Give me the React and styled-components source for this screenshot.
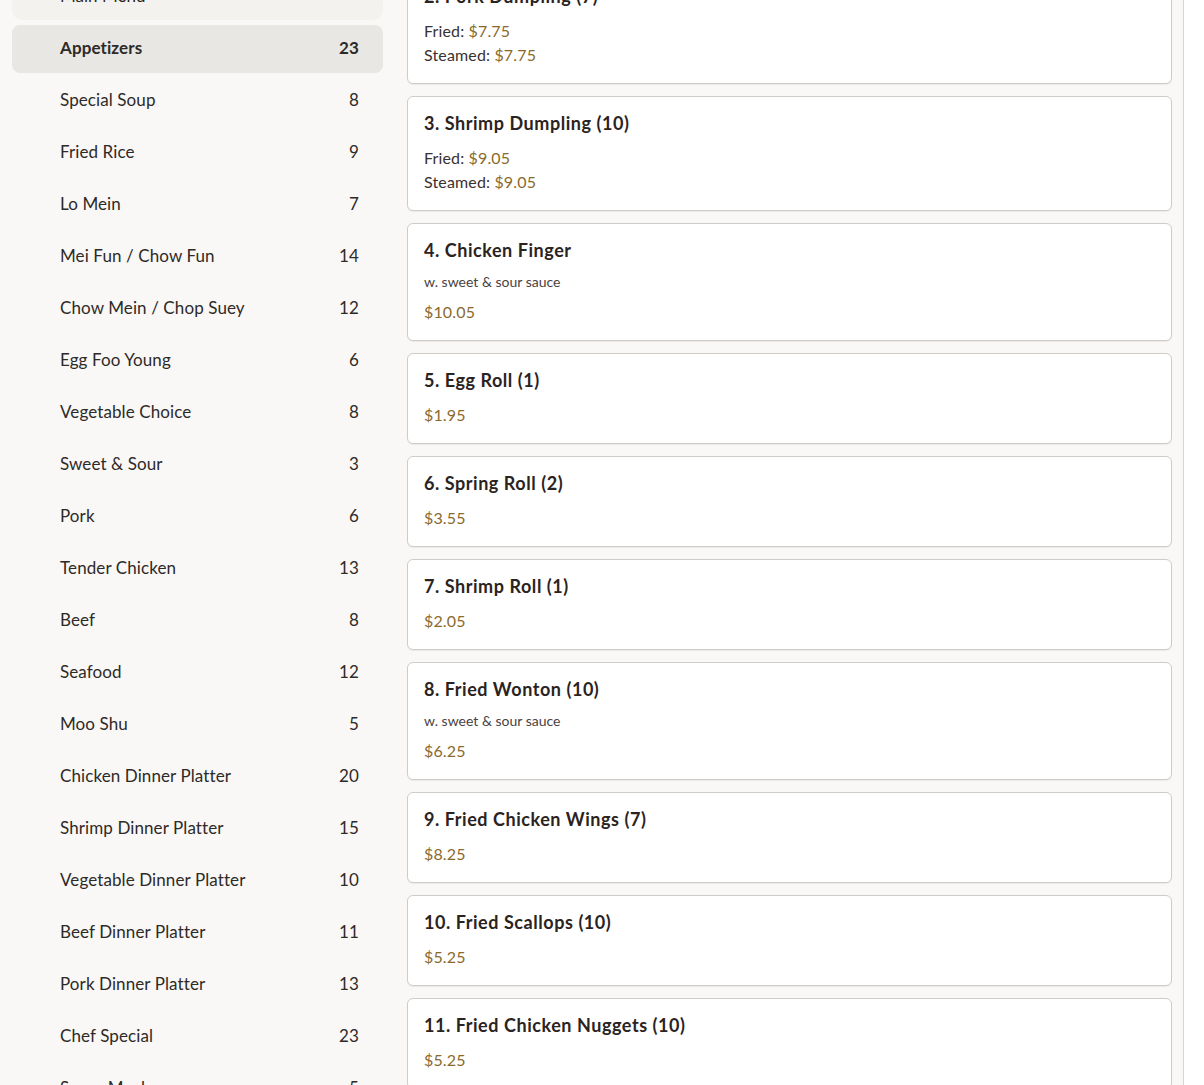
import React, { useLayoutEffect, useRef } from "react";
import styled, { createGlobalStyle } from "styled-components";

const Global = createGlobalStyle`
  html, body { margin: 0; padding: 0; background: #ffffff; }
  body { font-family: Lato, "Noto Sans", sans-serif; color: #2b2321; }
  * { box-sizing: border-box; }
`;

const Shell = styled.div`
  width: 1184px;
  height: 1085px;
  background: #f9f8f6;
  border-right: 1px solid #d9d6d2;
  display: grid;
  grid-template-columns: 371px 1fr;
  gap: 24px;
  padding: 0 11px 0 12px;
`;

const Scroller = styled.div`
  height: 1085px;
  overflow: hidden;
`;

const SideList = styled.nav`
  display: flex;
  flex-direction: column;
  gap: 4px;
  padding: 12px 0;
`;

const GroupHeader = styled.div`
  height: 48px;
  border-radius: 10px;
  background: #f3f2ef;
  display: flex;
  align-items: center;
  gap: 6px;
  padding: 0 24px 2px 30px;
  font-size: 17px;
  font-weight: 400;
  color: #2b2321;
  margin-bottom: 1px;
`;

const Item = styled.div`
  height: 48px;
  border-radius: 8px;
  display: flex;
  align-items: center;
  justify-content: space-between;
  padding: 0 24px 3px 48px;
  font-size: 17px;
  letter-spacing: 0.1px;
  color: #2e2a28;
  font-weight: ${(p) => (p.$active ? 700 : 400)};
  background: ${(p) => (p.$active ? "#e8e7e4" : "transparent")};
`;

const Count = styled.span`
  font-size: 17px;
`;

const CardList = styled.div`
  display: flex;
  flex-direction: column;
  gap: 12px;
  padding: 12px 0 24px;
`;

const SectionTitle = styled.h2`
  margin: 0 0 4px;
  font-size: 24px;
  font-weight: 700;
`;

const Card = styled.div`
  background: #ffffff;
  border: 1px solid #cfccc8;
  border-radius: 6px;
  padding: 15px 16px 16px;
  box-shadow: 0 1px 1px rgba(0, 0, 0, 0.06);
`;

const Title = styled.div`
  font-size: 18px;
  font-weight: 700;
  letter-spacing: 0.55px;
  line-height: 22px;
  color: #2b2321;
  margin-bottom: 12px;
`;

const Desc = styled.div`
  font-size: 14px;
  line-height: 20px;
  color: #4a4240;
  margin: -1px 0 8px;
`;

const PriceLine = styled.div`
  font-size: 16px;
  line-height: 24px;
  letter-spacing: 0.15px;
  color: #3a3230;
`;

const Price = styled.span`
  color: #8a6a2c;
`;

const categories = [
  ["Appetizers", 23],
  ["Special Soup", 8],
  ["Fried Rice", 9],
  ["Lo Mein", 7],
  ["Mei Fun / Chow Fun", 14],
  ["Chow Mein / Chop Suey", 12],
  ["Egg Foo Young", 6],
  ["Vegetable Choice", 8],
  ["Sweet & Sour", 3],
  ["Pork", 6],
  ["Tender Chicken", 13],
  ["Beef", 8],
  ["Seafood", 12],
  ["Moo Shu", 5],
  ["Chicken Dinner Platter", 20],
  ["Shrimp Dinner Platter", 15],
  ["Vegetable Dinner Platter", 10],
  ["Beef Dinner Platter", 11],
  ["Pork Dinner Platter", 13],
  ["Chef Special", 23],
  ["Super Meals", 5],
];

const items = [
  { t: "1. Crab Rangoon (8)", prices: [["", "$7.25"]] },
  { t: "2. Pork Dumpling (7)", prices: [["Fried", "$7.75"], ["Steamed", "$7.75"]] },
  { t: "3. Shrimp Dumpling (10)", prices: [["Fried", "$9.05"], ["Steamed", "$9.05"]] },
  { t: "4. Chicken Finger", d: "w. sweet & sour sauce", prices: [["", "$10.05"]] },
  { t: "5. Egg Roll (1)", prices: [["", "$1.95"]] },
  { t: "6. Spring Roll (2)", prices: [["", "$3.55"]] },
  { t: "7. Shrimp Roll (1)", prices: [["", "$2.05"]] },
  { t: "8. Fried Wonton (10)", d: "w. sweet & sour sauce", prices: [["", "$6.25"]] },
  { t: "9. Fried Chicken Wings (7)", prices: [["", "$8.25"]] },
  { t: "10. Fried Scallops (10)", prices: [["", "$5.25"]] },
  { t: "11. Fried Chicken Nuggets (10)", prices: [["", "$5.25"]] },
  { t: "12. Boneless Spare Ribs", prices: [["Sm", "$9.25"], ["Lg", "$16.25"]] },
];

function Chevron() {
  return (
    <svg width="12" height="12" viewBox="0 0 24 24" fill="none" stroke="#2b2321" strokeWidth="2.5" strokeLinecap="round" strokeLinejoin="round">
      <path d="M6 9l6 6 6-6" />
    </svg>
  );
}

export default function App() {
  const sideRef = useRef(null);
  const mainRef = useRef(null);
  useLayoutEffect(() => {
    if (sideRef.current) sideRef.current.scrollTop = 40;
    if (mainRef.current) {
      const cards = mainRef.current.querySelectorAll("[data-card]");
      const target = cards[1];
      if (target) mainRef.current.scrollTop = target.offsetTop - mainRef.current.offsetTop + 31;
    }
  }, []);

  return (
    <>
      <Global />
      <Shell>
        <Scroller ref={sideRef}>
          <SideList>
            <GroupHeader>
              <Chevron />
              Main Menu
            </GroupHeader>
            {categories.map(([name, n], i) => (
              <Item key={name} $active={i === 0}>
                <span>{name}</span>
                <Count>{n}</Count>
              </Item>
            ))}
          </SideList>
        </Scroller>
        <Scroller ref={mainRef}>
          <CardList>
            <SectionTitle>Appetizers</SectionTitle>
            {items.map((it) => (
              <Card key={it.t} data-card="1">
                <Title>{it.t}</Title>
                {it.d && <Desc>{it.d}</Desc>}
                {it.prices.map(([label, p]) => (
                  <PriceLine key={label + p}>
                    {label ? `${label}: ` : ""}
                    <Price>{p}</Price>
                  </PriceLine>
                ))}
              </Card>
            ))}
          </CardList>
        </Scroller>
      </Shell>
    </>
  );
}
